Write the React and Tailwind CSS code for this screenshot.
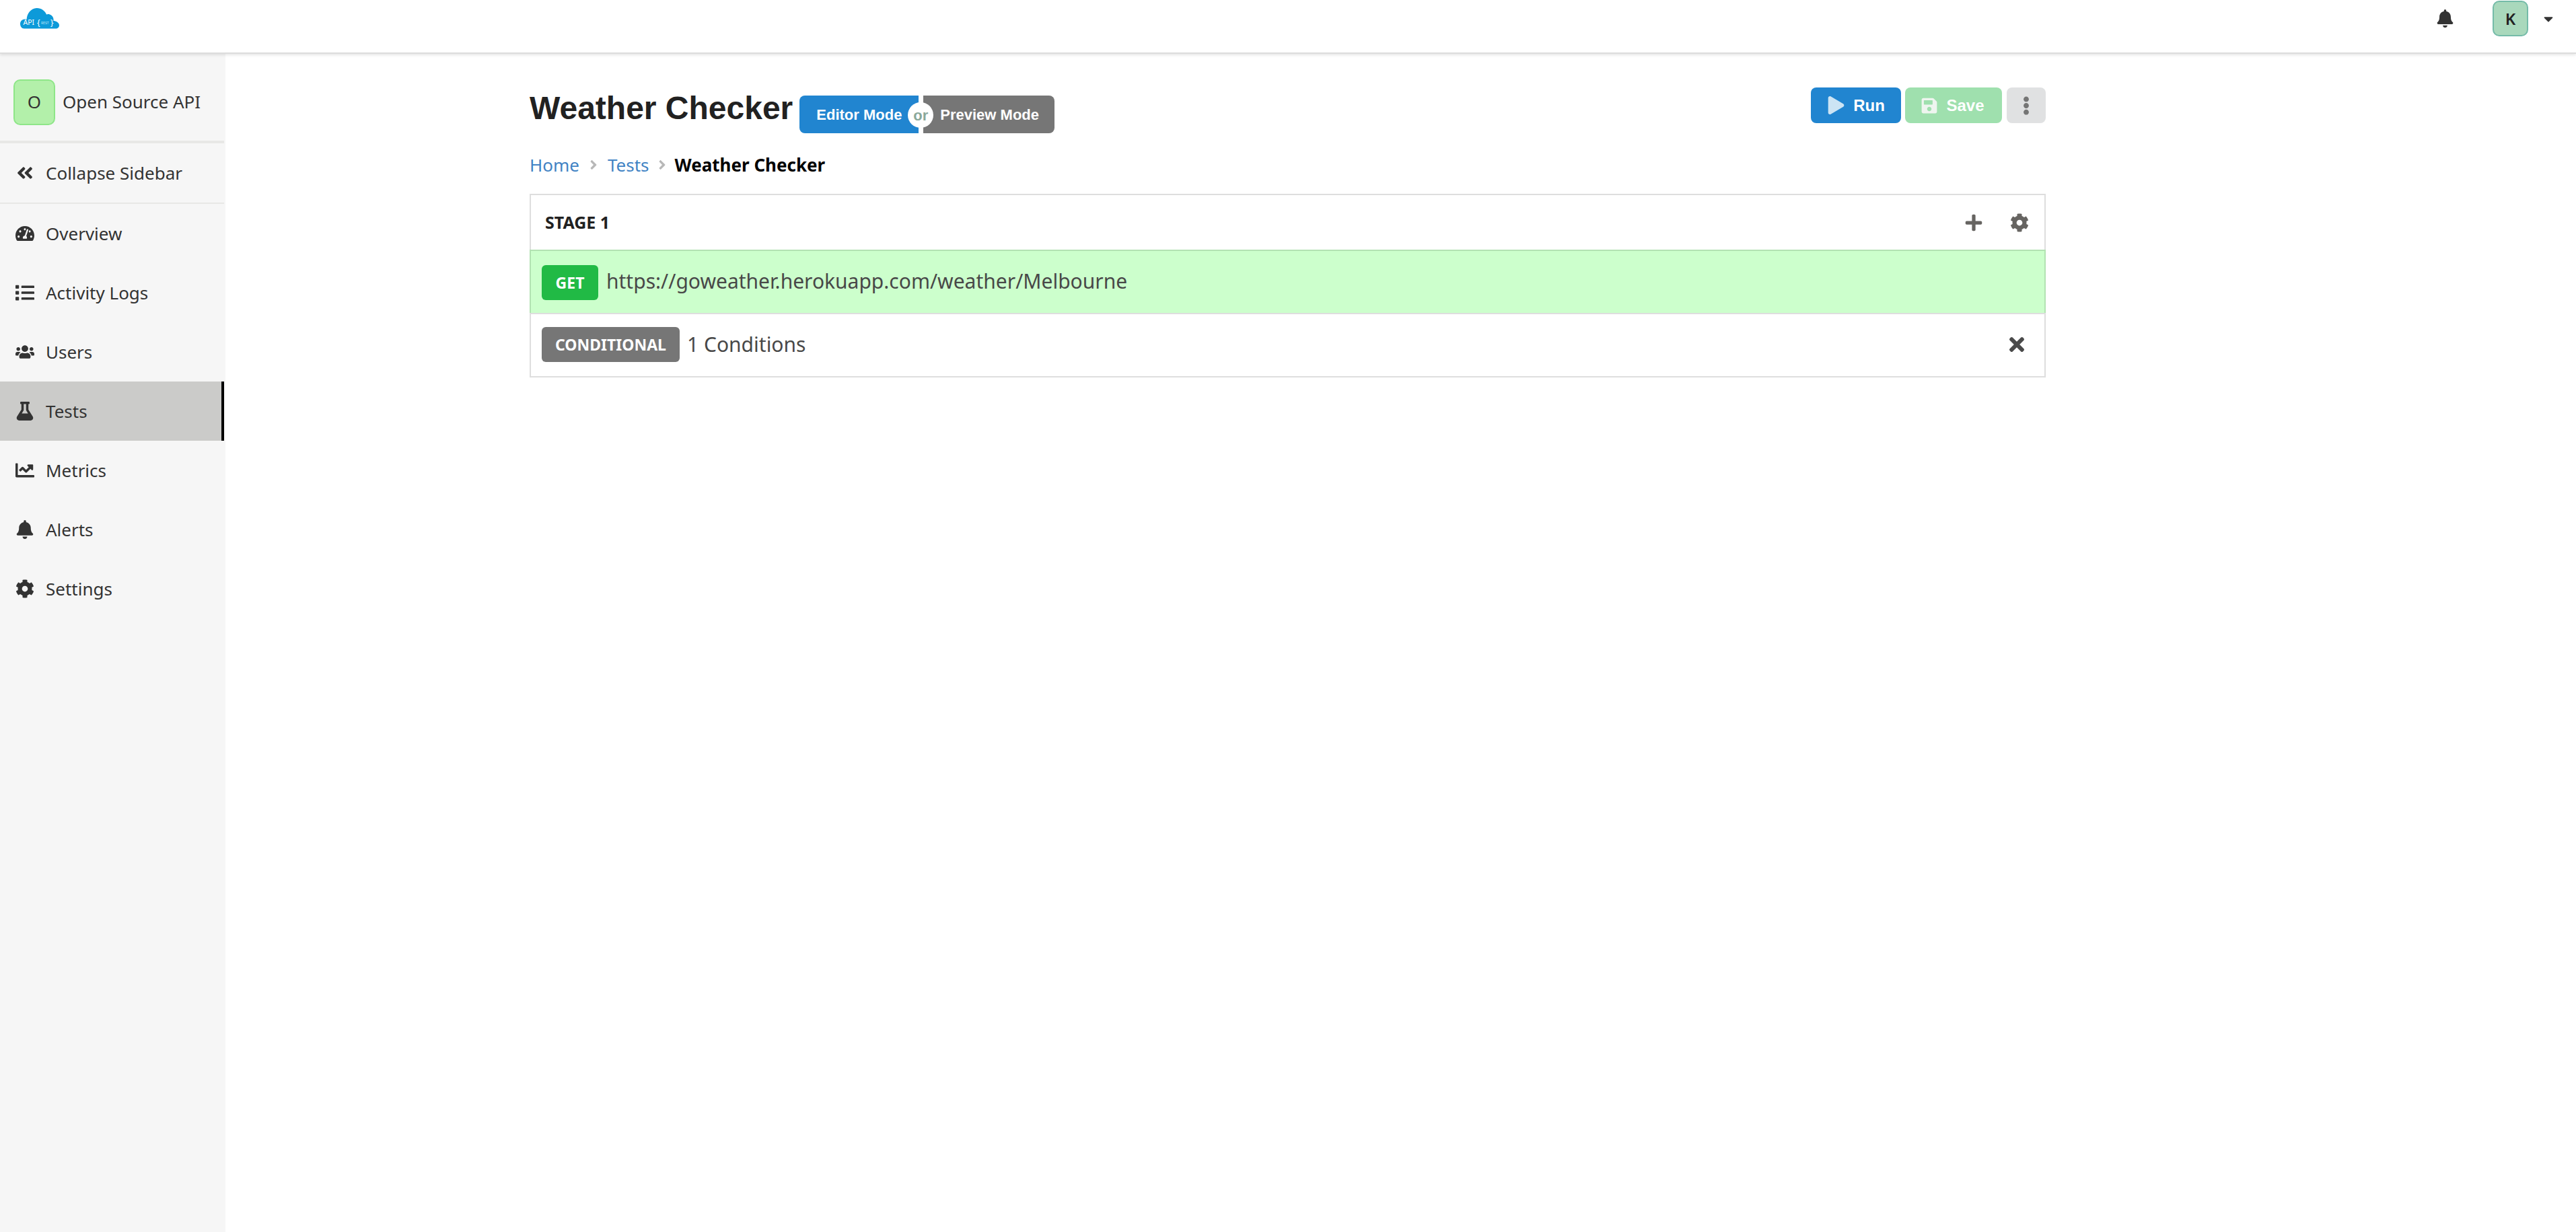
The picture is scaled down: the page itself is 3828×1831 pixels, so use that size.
import React from "react";
import {
  FaTachometerAlt, FaList, FaUsers, FaFlask, FaChartLine, FaBell, FaCog,
  FaAngleDoubleLeft, FaPlay, FaSave, FaEllipsisV, FaPlus, FaTimes, FaAngleRight, FaCaretDown,
} from "react-icons/fa";

const sans = "font-['Noto_Sans','Open_Sans',sans-serif]";
const arial = "font-['Liberation_Sans',Arial,sans-serif]";

function Logo() {
  return (
    <svg width="60" height="33" viewBox="0 0 60 33" className="block">
      <path
        d="M6 31.5 C2 31.5 0 28 0 24.5 C0 20.5 3 17.5 7 17.5 C8 17.5 9 17.6 9.6 18 C10 9 16 1.5 24.5 1 C31 0.8 37 5 39 10.5 C41 9.5 44 9.8 46 11.5 C49 13.5 50 17 49.5 20 C53 20 58 22.5 58 26.5 C58 30 55.5 31.5 53 31.5 Z"
        fill="#0d9ad9"
      />
      <text x="4.5" y="26" fontSize="10.5" fill="#ffffff" fontFamily="'Noto Sans',sans-serif">API</text>
      <text x="25" y="26.5" fontSize="12" fill="#ffffff" fontFamily="'Noto Sans',sans-serif">{"{"}</text>
      <text x="31" y="25" fontSize="5" fill="#bfe6f7" fontFamily="'Noto Sans',sans-serif">REST</text>
      <text x="45" y="26.5" fontSize="12" fill="#ffffff" fontFamily="'Noto Sans',sans-serif">{"}"}</text>
    </svg>
  );
}

function NavItem({ icon: Icon, label, active }) {
  return (
    <div
      className={`flex items-center h-[88px] w-[333px] text-[26px] text-[#333333] ${
        active ? "bg-[#cbcbc9] border-r-4 border-black" : ""
      }`}
    >
      <span className="w-[34px] ml-[20px] mr-[14px] flex justify-center shrink-0">
        <Icon className="text-[#333333] text-[28px] shrink-0" />
      </span>
      <span>{label}</span>
    </div>
  );
}

export default function App() {
  return (
    <div className={`flex flex-col min-h-screen h-[1831px] bg-white ${sans}`}>
      <header className="h-[80px] shrink-0 flex items-start bg-white border-b-2 border-[#dcdcdc] shadow-[0_2px_4px_rgba(0,0,0,0.10)] relative z-10">
        <div className="ml-[30px] mt-[11px]"><Logo /></div>
        <div className="ml-auto flex items-start">
          <FaBell className="text-[#333333] text-[27px] mt-[14px]" />
          <div className="ml-[57px] mt-[1px] w-[53px] h-[53px] rounded-[10px] bg-[#a9d8bc] border-2 border-[#74bba8] flex items-center justify-center text-[24px] font-semibold text-[#222222]">
            K
          </div>
          <FaCaretDown className="text-[#333333] text-[22px] ml-[19px] mr-[30px] mt-[17px]" />
        </div>
      </header>

      <div className="flex flex-1">
        <aside className="w-[335px] shrink-0 bg-[#f6f6f6]">
          <div className="h-[129px] flex items-center w-[333px] pl-[20px] pt-[14px] text-[26px] text-[#333333]">
            <div className="w-[62px] h-[68px] rounded-[10px] bg-[#b3f0aa] border-2 border-[#8ee688] flex items-center justify-center text-[26px]">
              O
            </div>
            <span className="ml-[11px]">Open Source API</span>
          </div>
          <div className="h-[4px] w-[333px] bg-[#e8e8e6]" />
          <NavItem icon={FaAngleDoubleLeft} label="Collapse Sidebar" />
          <div className="h-[2px] w-[333px] bg-[#e8e8e6]" />
          <NavItem icon={FaTachometerAlt} label="Overview" />
          <NavItem icon={FaList} label="Activity Logs" />
          <NavItem icon={FaUsers} label="Users" />
          <NavItem icon={FaFlask} label="Tests" active />
          <NavItem icon={FaChartLine} label="Metrics" />
          <NavItem icon={FaBell} label="Alerts" />
          <NavItem icon={FaCog} label="Settings" />
        </aside>

        <main className="flex-1 pl-[452px]">
          <div className="w-[2253px]">
            <div className="flex items-start pt-[50px] h-[208px] relative">
              <h1 className={`${arial} font-bold text-[48px] leading-[56px] text-[#212121] tracking-normal mt-[3px]`}>
                Weather Checker
              </h1>
              <div className={`${arial} font-bold text-[22px] text-white flex ml-[10px] mt-[12px] h-[56px] relative`}>
                <div className="w-[177px] bg-[#2185d0] rounded-l-[8px] flex items-center pl-[25px]">Editor Mode</div>
                <div className="w-[7px]" />
                <div className="w-[195px] bg-[#767676] rounded-r-[8px] flex items-center pl-[25px]">Preview Mode</div>
                <div className="absolute left-[161px] top-[10px] w-[38px] h-[38px] rounded-full bg-white flex items-center justify-center text-[#8aa89a] text-[22px] font-bold">
                  or
                </div>
              </div>
              <div className={`${arial} font-bold text-[24px] ml-auto flex h-[53px]`}>
                <button className="w-[134px] h-[53px] bg-[#2185d0] rounded-[8px] text-white flex items-center justify-center gap-[12px]">
                  <FaPlay className="text-[27px] text-[#cce4f4]" /> Run
                </button>
                <button className="w-[144px] h-[53px] bg-[#9fe0ae] rounded-[8px] text-white ml-[6px] flex items-center justify-center gap-[12px] pr-[3px]">
                  <FaSave className="text-[26px] text-[#eef5ef]" /> Save
                </button>
                <button className="w-[58px] h-[53px] bg-[#e0e1e2] rounded-[8px] ml-[7px] flex items-center justify-center">
                  <FaEllipsisV className="text-[28px] text-[#757575]" />
                </button>
              </div>
              <div className="absolute left-0 top-[147px] flex items-center text-[26px] leading-[36px]">
                <span className="text-[#4183c4]">Home</span>
                <FaAngleRight className="text-[#b8b8b8] text-[22px] mx-[10px]" />
                <span className="text-[#4183c4]">Tests</span>
                <FaAngleRight className="text-[#b8b8b8] text-[22px] mx-[8px]" />
                <span className="text-black font-bold">Weather Checker</span>
              </div>
            </div>

            <div className="border-2 border-[#dedede] bg-white">
              <div className="h-[81px] flex items-center pl-[21px] relative">
                <span className="text-[25px] font-bold text-[#212121]">STAGE 1</span>
                <div className="ml-auto flex items-center gap-[40px] pr-[23px]">
                  <FaPlus className="text-[#666461] text-[28px]" />
                  <FaCog className="text-[#666461] text-[28px]" />
                </div>
              </div>
              <div className="-mx-[2px] h-[94px] bg-[#ccffcc] border-x-2 border-t-2 border-[#b2e2b2] flex items-center pl-[16px]">
                <span className="w-[84px] h-[52px] rounded-[6px] bg-[#21ba45] text-white font-bold text-[23px] flex items-center justify-center mt-[2px]">
                  GET
                </span>
                <span className="ml-[12px] text-[30px] text-[#484848] mb-[4px]">https://goweather.herokuapp.com/weather/Melbourne</span>
              </div>
              <div className="border-t-2 border-[#dedede] h-[94px] flex items-center pl-[16px] pr-[25px] pb-[2px]">
                <span className="w-[205px] h-[52px] rounded-[6px] bg-[#767676] text-white font-bold text-[23px] flex items-center justify-center">
                  CONDITIONAL
                </span>
                <span className="ml-[11px] text-[30px] text-[#484848] mb-[2px]">1 Conditions</span>
                <FaTimes className="ml-auto text-[#4a4a4a] text-[32px]" />
              </div>
            </div>
          </div>
        </main>
      </div>
    </div>
  );
}
